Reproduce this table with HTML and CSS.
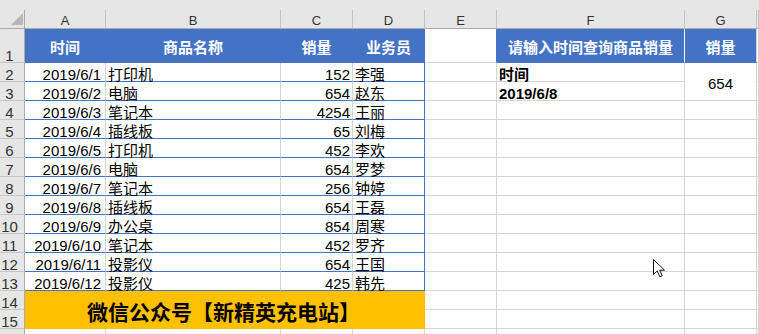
FILE: index.html
```html
<!DOCTYPE html>
<html lang="zh-CN">
<head>
<meta charset="utf-8">
<title>销量查询</title>
<link rel="stylesheet" href="styles.css">
</head>
<body>
<div class="sheet">
  <div class="strip"></div>
  <div class="grid">
    <div class="ch corner"></div><div class="ch">A</div><div class="ch">B</div><div class="ch">C</div><div class="ch">D</div><div class="ch">E</div><div class="ch">F</div><div class="ch">G</div><div class="ch"></div>

    <div class="rh">1</div><div class="hd">时间</div><div class="hd">商品名称</div><div class="hd">销量</div><div class="hd">业务员</div><div class="e1"></div><div class="hd hf">请输入时间查询商品销量</div><div class="hd hg">销量</div><div></div>

    <div class="rh">2</div><div class="date tb">2019/6/1</div><div class="txt tb">打印机</div><div class="num tb">152</div><div class="txt tb tr">李强</div><div></div><div class="txt bold">时间</div><div class="merged">654</div><div></div>
    <div class="rh">3</div><div class="date tb">2019/6/2</div><div class="txt tb">电脑</div><div class="num tb">654</div><div class="txt tb tr">赵东</div><div></div><div class="txt bold">2019/6/8</div><div></div>
    <div class="rh">4</div><div class="date tb">2019/6/3</div><div class="txt tb">笔记本</div><div class="num tb">4254</div><div class="txt tb tr">王丽</div><div></div><div></div><div></div><div></div>
    <div class="rh">5</div><div class="date tb">2019/6/4</div><div class="txt tb">插线板</div><div class="num tb">65</div><div class="txt tb tr">刘梅</div><div></div><div></div><div></div><div></div>
    <div class="rh">6</div><div class="date tb">2019/6/5</div><div class="txt tb">打印机</div><div class="num tb">452</div><div class="txt tb tr">李欢</div><div></div><div></div><div></div><div></div>
    <div class="rh">7</div><div class="date tb">2019/6/6</div><div class="txt tb">电脑</div><div class="num tb">654</div><div class="txt tb tr">罗梦</div><div></div><div></div><div></div><div></div>
    <div class="rh">8</div><div class="date tb">2019/6/7</div><div class="txt tb">笔记本</div><div class="num tb">256</div><div class="txt tb tr">钟婷</div><div></div><div></div><div></div><div></div>
    <div class="rh">9</div><div class="date tb">2019/6/8</div><div class="txt tb">插线板</div><div class="num tb">654</div><div class="txt tb tr">王磊</div><div></div><div></div><div></div><div></div>
    <div class="rh">10</div><div class="date tb">2019/6/9</div><div class="txt tb">办公桌</div><div class="num tb">854</div><div class="txt tb tr">周寒</div><div></div><div></div><div></div><div></div>
    <div class="rh">11</div><div class="date tb">2019/6/10</div><div class="txt tb">笔记本</div><div class="num tb">452</div><div class="txt tb tr">罗齐</div><div></div><div></div><div></div><div></div>
    <div class="rh">12</div><div class="date tb">2019/6/11</div><div class="txt tb">投影仪</div><div class="num tb">654</div><div class="txt tb tr">王国</div><div></div><div></div><div></div><div></div>
    <div class="rh">13</div><div class="date tb">2019/6/12</div><div class="txt tb">投影仪</div><div class="num tb">425</div><div class="txt tb tr">韩先</div><div></div><div></div><div></div><div></div>

    <div class="rh">14</div><div class="banner">微信公众号【新精英充电站】</div><div></div><div></div><div></div><div></div>
    <div class="rh">15</div><div></div><div></div><div></div><div></div>
    <div class="rh"></div><div></div><div></div><div></div><div></div><div></div><div></div><div></div><div></div>
  </div>
  <svg class="cursor" width="14" height="20" viewBox="0 0 14 20" aria-hidden="true">
    <path d="M0.5 0.5 L0.5 15.5 L4.2 12 L6.8 17.8 L9.2 16.8 L6.7 11.2 L11.5 11.2 Z" fill="#fff" stroke="#111" stroke-width="1" stroke-linejoin="miter"/>
  </svg>
</div>
</body>
</html>
```

FILE: styles.css
```css
html, body {
  margin: 0;
  padding: 0;
  background: #ffffff;
  overflow: hidden;
}

.sheet {
  position: relative;
  width: 759px;
  height: 334px;
  overflow: hidden;
  font-family: "Liberation Sans", "Noto Sans CJK SC", sans-serif;
  font-size: 15px;
  color: #000;
}

.strip {
  height: 10px;
  background: #e6e6e6;
}

.grid {
  display: grid;
  grid-template-columns: 25px 81px 175px 72px 72px 72px 188px 72px 2px;
  grid-template-rows: 19px 34px repeat(15, 19px);
}

.grid > div {
  box-sizing: border-box;
  border-right: 1px solid #d4d4d4;
  border-bottom: 1px solid #d4d4d4;
  display: flex;
  align-items: flex-end;
  line-height: 12px;
  white-space: nowrap;
  min-width: 0;
}

.grid > .ch {
  background: #e6e6e6;
  border-right-color: #c4c4c4;
  border-bottom-color: #ababab;
  justify-content: center;
  font-size: 13px;
  color: #333;
  padding-bottom: 1px;
}

.grid > .corner {
  position: relative;
  border-right-color: #ababab;
}

.corner::after {
  content: "";
  position: absolute;
  right: 1px;
  bottom: 3px;
  width: 12px;
  height: 12px;
  background: #b8b8b8;
  clip-path: polygon(100% 0, 100% 100%, 0 100%);
}

.grid > .rh {
  background: #e6e6e6;
  border-right-color: #ababab;
  border-bottom-color: #c6c6c6;
  justify-content: center;
  padding-right: 5px;
  color: #333;
}

.grid > .hd {
  background: #4472c4;
  color: #fff;
  font-weight: bold;
  align-items: center;
  justify-content: center;
  line-height: 15px;
  padding-top: 3px;
  border-color: #4472c4;
}

.grid > .hf {
  border-right-color: #ffffff;
}

.grid > .hg {
  border-right-color: #d4d4d4;
}

.grid > .e1 {
  border-right-color: #4472c4;
}

.grid > .date {
  justify-content: flex-end;
  padding-right: 4px;
}

.grid > .num {
  justify-content: flex-end;
  padding-right: 2px;
}

.grid > .txt {
  padding-left: 2px;
}

.grid > .bold {
  font-weight: bold;
}

.grid > .tb {
  border-bottom-color: #4472c4;
}

.grid > .tr {
  border-right-color: #4472c4;
}

.grid > .merged {
  grid-row: span 2;
  align-items: center;
  justify-content: center;
  line-height: 15px;
  padding-top: 3px;
}

.grid > .banner {
  grid-column: span 4;
  grid-row: span 2;
  background: #ffc000;
  border-color: #ffc000;
  font-size: 21px;
  font-weight: bold;
  align-items: center;
  justify-content: center;
  line-height: 21px;
  padding-top: 5px;
  padding-right: 2px;
}

.cursor {
  position: absolute;
  left: 653px;
  top: 259px;
}
```
